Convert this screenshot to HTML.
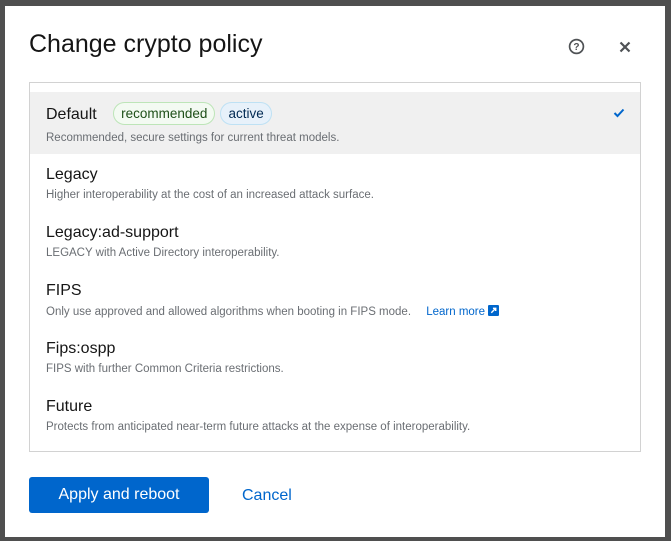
<!DOCTYPE html>
<html><head><style>
body{margin:0;width:671px;height:541px;background:#4f4f4f;font-family:"Liberation Sans",sans-serif;position:relative;overflow:hidden}
.m{position:absolute;left:5px;top:6px;width:660px;height:531px;background:#fff}
.t{position:absolute;left:24px;top:24px;font-size:25px;color:#151515}
.list{position:absolute;left:24px;top:76px;width:610px;height:368px;border:1px solid #d2d2d2}
.row{position:absolute;left:0;width:610px;height:62px}
.row .h{position:absolute;left:16px;top:7px;font-size:16px;color:#151515}
.row .d{position:absolute;left:16px;top:30px;font-size:11.5px;color:#6a6e73}
.lab{display:inline-block;font-size:13.5px;padding:3px 7px;border-radius:14px;vertical-align:1px}
.btn{position:absolute;left:24px;top:471px;width:180px;height:36px;background:#0066cc;color:#fff;border-radius:3px;font-size:16px;text-align:center;line-height:36px}
.c{position:absolute;left:237px;top:481px;font-size:16px;color:#0066cc}
</style></head><body>
<div class="m">
<div class="t">Change crypto policy</div>
<svg style="position:absolute;left:563px;top:32px" width="17" height="17" viewBox="0 0 16 16"><circle cx="8" cy="8" r="6.5" fill="none" stroke="#4f5255" stroke-width="1.6"/><text x="8" y="11.5" font-size="9.5" font-weight="bold" text-anchor="middle" fill="#4f5255" font-family="Liberation Sans">?</text></svg>
<svg style="position:absolute;left:614px;top:35px" width="12" height="12" viewBox="0 0 12 12"><path d="M1.5 1.5L10.5 10.5M10.5 1.5L1.5 10.5" stroke="#4f5255" stroke-width="2.2"/></svg>
<div class="list">
<div class="row" style="top:9px;background:#f0f0f0"><div class="h" style="top:10px">Default <span class="lab" style="background:#f3faf2;border:1px solid #bde5b8;color:#1e4f18;margin-left:12px">recommended</span><span class="lab" style="background:#e7f1fa;border:1px solid #bee1f4;color:#002952;margin-left:5px">active</span></div><div class="d" style="top:40px">Recommended, secure settings for current threat models.</div>
<svg style="position:absolute;left:583px;top:16px" width="12" height="10" viewBox="0 0 12 10"><path d="M1.5 5L4.5 8L10.5 1.5" fill="none" stroke="#0066cc" stroke-width="2"/></svg></div>
<div class="row" style="top:76px"><div class="h">Legacy</div><div class="d">Higher interoperability at the cost of an increased attack surface.</div></div>
<div class="row" style="top:134px"><div class="h">Legacy:ad-support</div><div class="d">LEGACY with Active Directory interoperability.</div></div>
<div class="row" style="top:192px"><div class="h">FIPS</div><div class="d">Only use approved and allowed algorithms when booting in FIPS mode. <span style="color:#0066cc;margin-left:12px">Learn more</span> <svg width="11" height="11" viewBox="0 0 10 10" style="vertical-align:-1px"><rect width="10" height="10" rx="1" fill="#0066cc"/><path d="M3 7L7 3M4.5 3H7V5.5" stroke="#fff" stroke-width="1.3" fill="none"/></svg></div></div>
<div class="row" style="top:250px"><div class="h">Fips:ospp</div><div class="d">FIPS with further Common Criteria restrictions.</div></div>
<div class="row" style="top:308px"><div class="h">Future</div><div class="d">Protects from anticipated near-term future attacks at the expense of interoperability.</div></div>
</div>
<div class="btn">Apply and reboot</div>
<div class="c">Cancel</div>
</div>
</body></html>
